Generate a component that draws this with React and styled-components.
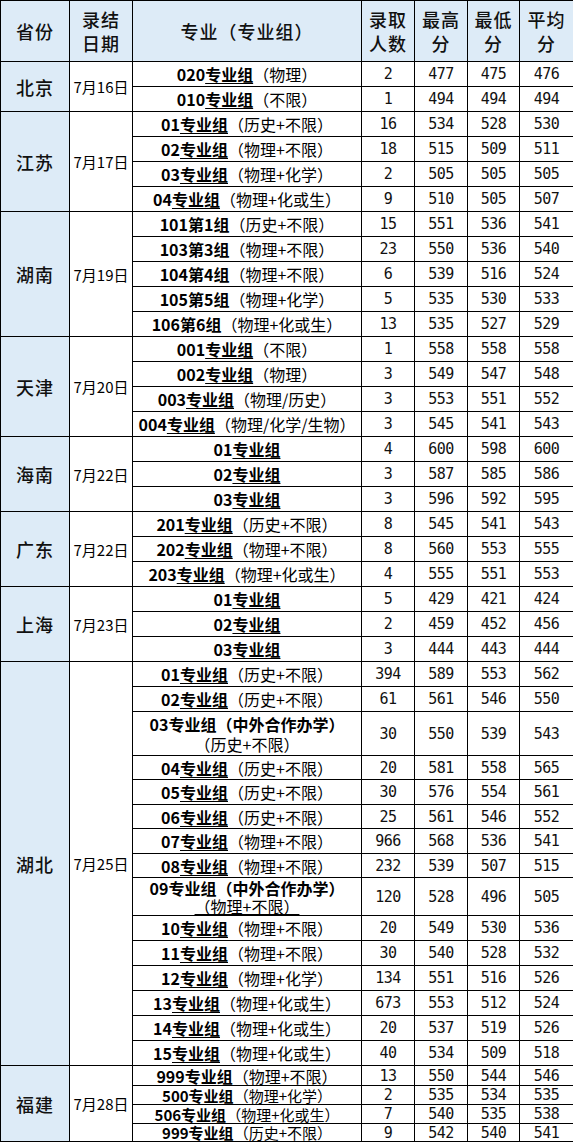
import React from 'react';
import styled, { createGlobalStyle } from 'styled-components';

const GlobalStyle = createGlobalStyle`
  html, body {
    margin: 0;
    padding: 0;
    background: #ffffff;
  }
  body {
    font-family: "Noto Sans CJK SC", "Noto Sans", sans-serif;
    color: #000000;
  }
`;

const Table = styled.table`
  width: 573px;
  border-collapse: collapse;
  table-layout: fixed;
  font-family: "Noto Sans CJK SC", sans-serif;
`;

const Row = styled.tr`
  height: ${props => props.h}px;
`;

const HeadCell = styled.th`
  border: 1px solid #000000;
  background-color: #ddebf7;
  font-size: 18px;
  font-weight: 500;
  line-height: 24px;
  color: #111111;
  padding: 0;
  text-align: center;
  letter-spacing: 1px;
`;

const ProvCell = styled.td`
  border: 1px solid #000000;
  background-color: #ddebf7;
  font-size: 18px;
  font-weight: 500;
  color: #111111;
  text-align: center;
  padding: 0;
  letter-spacing: 1px;
`;

const DateCell = styled.td`
  border: 1px solid #000000;
  font-size: 15px;
  text-align: center;
  padding: 0;
`;

const GroupCell = styled.td`
  border: 1px solid #000000;
  font-size: ${props => (props.lh < 18 ? 15 : 16)}px;
  line-height: ${props => props.lh}px;
  text-align: center;
  padding: 0;
  white-space: nowrap;
`;

const NumCell = styled.td`
  border: 1px solid #000000;
  font-family: "DejaVu Sans Mono", "Liberation Mono", monospace;
  font-size: 15px;
  line-height: ${props => props.lh}px;
  letter-spacing: -0.5px;
  text-align: center;
  padding: 0;
  color: #111111;
`;

const Code = styled.span`
  font-weight: 700;
`;

const Under = styled.span`
  font-weight: 700;
  text-decoration: underline;
  text-underline-offset: 2px;
`;

const Sub = styled.div`
  text-decoration: ${props => (props.u ? 'underline' : 'none')};
`;

const provinces = [
  {
    name: '北京', date: '7月16日', rows: [
      ['020', '（物理）', 2, 477, 475, 476],
      ['010', '（不限）', 1, 494, 494, 494],
    ],
  },
  {
    name: '江苏', date: '7月17日', rows: [
      ['01', '（历史+不限）', 16, 534, 528, 530],
      ['02', '（物理+不限）', 18, 515, 509, 511],
      ['03', '（物理+化学）', 2, 505, 505, 505],
      ['04', '（物理+化或生）', 9, 510, 505, 507],
    ],
  },
  {
    name: '湖南', date: '7月19日', rows: [
      ['101第1组', '（历史+不限）', 15, 551, 536, 541, 'n'],
      ['103第3组', '（物理+不限）', 23, 550, 536, 540, 'n'],
      ['104第4组', '（物理+不限）', 6, 539, 516, 524, 'n'],
      ['105第5组', '（物理+化学）', 5, 535, 530, 533, 'n'],
      ['106第6组', '（物理+化或生）', 13, 535, 527, 529, 'n'],
    ],
  },
  {
    name: '天津', date: '7月20日', rows: [
      ['001', '（不限）', 1, 558, 558, 558],
      ['002', '（物理）', 3, 549, 547, 548],
      ['003', '（物理/历史）', 3, 553, 551, 552],
      ['004', '（物理/化学/生物）', 3, 545, 541, 543],
    ],
  },
  {
    name: '海南', date: '7月22日', rows: [
      ['01', '', 4, 600, 598, 600],
      ['02', '', 3, 587, 585, 586],
      ['03', '', 3, 596, 592, 595],
    ],
  },
  {
    name: '广东', date: '7月22日', rows: [
      ['201', '（历史+不限）', 8, 545, 541, 543],
      ['202', '（物理+不限）', 8, 560, 553, 555],
      ['203', '（物理+化或生）', 4, 555, 551, 553],
    ],
  },
  {
    name: '上海', date: '7月23日', rows: [
      ['01', '', 5, 429, 421, 424],
      ['02', '', 2, 459, 452, 456],
      ['03', '', 3, 444, 443, 444],
    ],
  },
  {
    name: '湖北', date: '7月25日', rows: [
      ['01', '（历史+不限）', 394, 589, 553, 562],
      ['02', '（历史+不限）', 61, 561, 546, 550],
      ['03', '（历史+不限）', 30, 550, 539, 543, 'd', 44],
      ['04', '（历史+不限）', 20, 581, 558, 565, '', 24],
      ['05', '（历史+不限）', 30, 576, 554, 561, '', 25],
      ['06', '（历史+不限）', 25, 561, 546, 552, '', 24],
      ['07', '（物理+不限）', 966, 568, 536, 541, '', 25],
      ['08', '（物理+不限）', 232, 539, 507, 515, '', 24],
      ['09', '（物理+不限）', 120, 528, 496, 505, 'du', 38],
      ['10', '（物理+不限）', 20, 549, 530, 536],
      ['11', '（物理+不限）', 30, 540, 528, 532],
      ['12', '（物理+化学）', 134, 551, 516, 526],
      ['13', '（物理+化或生）', 673, 553, 512, 524],
      ['14', '（物理+化或生）', 20, 537, 519, 526],
      ['15', '（物理+化或生）', 40, 534, 509, 518],
    ],
  },
  {
    name: '福建', date: '7月28日', rows: [
      ['999', '（物理+不限）', 13, 550, 544, 546, '', 20],
      ['500', '（物理+化学）', 2, 535, 534, 535, '', 19],
      ['506', '（物理+化或生）', 7, 540, 535, 538, '', 19],
      ['999', '（历史+不限）', 9, 542, 540, 541, '', 18],
    ],
  },
];

function GroupName({ row, lh }) {
  const [code, subj, , , , , kind, h] = row;
  if (kind === 'd' || kind === 'du') {
    const dl = h > 40 ? 20 : 18;
    return (
      <GroupCell lh={dl}>
        <Code>{code}专业组（中外合作办学）</Code>
        <Sub u={kind === 'du'}>{subj}</Sub>
      </GroupCell>
    );
  }
  if (kind === 'n') {
    return (
      <GroupCell lh={lh}>
        <Code>{code}</Code>
        {subj}
      </GroupCell>
    );
  }
  return (
    <GroupCell lh={lh}>
      <Code>{code}</Code>
      <Under>专业组</Under>
      {subj}
    </GroupCell>
  );
}

export default function App() {
  return (
    <>
      <GlobalStyle />
      <Table>
        <colgroup>
          <col style={{ width: 69 }} />
          <col style={{ width: 63 }} />
          <col style={{ width: 229 }} />
          <col style={{ width: 53 }} />
          <col style={{ width: 53 }} />
          <col style={{ width: 52 }} />
          <col style={{ width: 54 }} />
        </colgroup>
        <thead>
          <Row h={61}>
            <HeadCell>省份</HeadCell>
            <HeadCell>录结<br />日期</HeadCell>
            <HeadCell>专业（专业组）</HeadCell>
            <HeadCell>录取<br />人数</HeadCell>
            <HeadCell>最高<br />分</HeadCell>
            <HeadCell>最低<br />分</HeadCell>
            <HeadCell>平均<br />分</HeadCell>
          </Row>
        </thead>
        <tbody>
          {provinces.map(p =>
            p.rows.map((r, i) => {
              const h = r[7] || 25;
              const lh = Math.min(18, h - 2);
              return (
                <Row key={p.name + i} h={h}>
                  {i === 0 && <ProvCell rowSpan={p.rows.length}>{p.name}</ProvCell>}
                  {i === 0 && <DateCell rowSpan={p.rows.length}>{p.date}</DateCell>}
                  <GroupName row={r} lh={lh} />
                  <NumCell lh={lh}>{r[2]}</NumCell>
                  <NumCell lh={lh}>{r[3]}</NumCell>
                  <NumCell lh={lh}>{r[4]}</NumCell>
                  <NumCell lh={lh}>{r[5]}</NumCell>
                </Row>
              );
            })
          )}
        </tbody>
      </Table>
    </>
  );
}
